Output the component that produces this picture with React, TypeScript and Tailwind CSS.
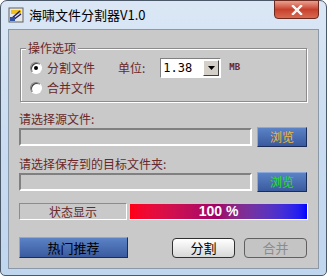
import type { ReactNode } from 'react';

// 海啸文件分割器 — 仿 Win7 窗口

const cjk = { fontFamily: '"Noto Sans CJK SC", "Liberation Sans", sans-serif' };
const mono = { fontFamily: '"DejaVu Sans Mono", monospace' };

function AppIcon() {
  return (
    <svg width="16" height="16" viewBox="0 0 16 16" className="shrink-0">
      <rect x="1" y="1" width="14" height="14" fill="#e8e8e8" stroke="#606060" />
      <rect x="3" y="3" width="10" height="4" fill="#f0c020" />
      <path d="M3 12 L12 4 M5 13 L13 7" stroke="#202060" strokeWidth="1.5" />
      <rect x="2" y="10" width="5" height="4" fill="#3050a0" />
    </svg>
  );
}

function Radio({ checked }: { checked?: boolean }) {
  return (
    <span className="flex h-[12px] w-[12px] items-center justify-center rounded-full border border-[#808080] border-b-white border-r-white bg-white shadow-[inset_1px_1px_0_#404040]">
      {checked && <span className="h-[4px] w-[4px] rounded-full bg-black" />}
    </span>
  );
}

function BlueBtn({ color, children }: { color: string; children: ReactNode }) {
  return (
    <div className="flex h-[20px] w-[50px] items-center justify-center border border-t-[#8aa8dc] border-l-[#8aa8dc] border-r-[#1c2c58] border-b-[#1c2c58] bg-gradient-to-b from-[#5b83c6] to-[#3a5a9e] text-[12px]" style={{ color }}>
      {children}
    </div>
  );
}

function PathField() {
  return <div className="h-[18px] w-[233px] border-2 border-t-[#808080] border-l-[#808080] border-b-white border-r-white bg-[#c9c9c9]" />;
}

export default function App() {
  return (
    <div className="h-[277px] w-[327px] bg-white" style={cjk}>
      <div className="flex h-[276px] w-[327px] flex-col rounded-t-[7px] rounded-b-[5px] border border-[#4a5868] bg-gradient-to-b from-[#dbe7f5] via-[#c9dcf1] to-[#c0d6ef]">
        {/* 标题栏 */}
        <div className="relative flex h-[28px] items-center gap-[5px] pl-[7px]">
          <AppIcon />
          <span className="text-[13px] text-black">海啸文件分割器V1.0</span>
          <div className="absolute right-[7px] top-[-1px] flex h-[19px] w-[45px] items-center justify-center rounded-b-[4px] border border-[#6b2a20] bg-gradient-to-b from-[#e8a090] via-[#c7402c] to-[#d86a50]">
            <svg width="12" height="10" viewBox="0 0 12 10">
              <path d="M2 1 L10 9 M10 1 L2 9" stroke="#fff" strokeWidth="2.4" strokeLinecap="square" />
              <path d="M2 1 L10 9 M10 1 L2 9" stroke="#f4f4f4" strokeWidth="1.2" />
            </svg>
          </div>
        </div>

        {/* 客户区 */}
        <div className="mx-[7px] h-[240px] border border-[#8a98a8] bg-[#c9c9c9] text-[12px] text-[#6a2828]">
          <div className="flex flex-col px-[10px] pt-[18px]">
            {/* 操作选项 */}
            <div className="relative mx-[1px] h-[54px] border border-[#8c8c8c] shadow-[1px_1px_0_#fff,inset_1px_1px_0_#fff]">
              <span className="absolute left-[5px] top-[-9px] bg-[#c9c9c9] px-[2px] leading-[16px]">操作选项</span>
              <div className="flex flex-col gap-[6px] pl-[9px] pt-[12px]">
                <div className="flex h-[14px] items-center">
                  <Radio checked />
                  <span className="ml-[5px]">分割文件</span>
                  <span className="ml-[23px]">单位:</span>
                  <div className="ml-[15px] flex h-[20px] w-[61px] items-center border border-t-[#808080] border-l-[#808080] border-b-white border-r-white bg-white">
                    <span className="flex-1 pl-[2px] text-[12px] text-black" style={mono}>1.38</span>
                    <span className="mr-[1px] flex h-[16px] w-[16px] items-center justify-center border border-t-white border-l-white border-r-[#404040] border-b-[#404040] bg-[#d4d0c8]">
                      <svg width="7" height="4" viewBox="0 0 7 4"><path d="M0 0 H7 L3.5 4 Z" fill="#000" /></svg>
                    </span>
                  </div>
                  <span className="ml-[8px] text-[9px] font-bold" style={mono}>MB</span>
                </div>
                <div className="flex h-[14px] items-center">
                  <Radio />
                  <span className="ml-[5px]">合并文件</span>
                </div>
              </div>
            </div>

            {/* 源文件 */}
            <span className="mt-[9px] leading-[16px]">请选择源文件:</span>
            <div className="flex items-center gap-[5px]">
              <PathField />
              <BlueBtn color="#f2b83a">浏览</BlueBtn>
            </div>

            {/* 目标文件夹 */}
            <span className="mt-[9px] leading-[16px]">请选择保存到的目标文件夹:</span>
            <div className="flex items-center gap-[5px]">
              <PathField />
              <BlueBtn color="#22e022">浏览</BlueBtn>
            </div>

            {/* 状态 */}
            <div className="mt-[11px] flex h-[17px] items-stretch gap-[2px]">
              <div className="flex w-[108px] items-center justify-center border border-t-[#8c8c8c] border-l-[#8c8c8c] border-b-white border-r-white">状态显示</div>
              <div className="flex flex-1 items-center justify-center border border-b-white border-r-white border-t-[#c9c9c9] border-l-[#c9c9c9] bg-gradient-to-r from-[#ff0010] via-[#a0006a] to-[#0000ff] text-[14px] font-bold text-white" style={{ fontFamily: '"Liberation Sans", sans-serif' }}>
                100 %
              </div>
            </div>

            {/* 按钮 */}
            <div className="mt-[17px] flex items-center">
              <div className="flex h-[21px] w-[109px] items-center justify-center border border-t-[#8aa8dc] border-l-[#8aa8dc] border-r-[#1c2c58] border-b-[#1c2c58] bg-gradient-to-b from-[#5b83c6] to-[#3a5a9e] text-[13px] text-black">
                热门推荐
              </div>
              <div className="ml-[44px] flex h-[20px] w-[63px] items-center justify-center rounded-[4px] border border-[#303030] bg-gradient-to-b from-white to-[#d8d8d8] text-[13px] text-black">
                分割
              </div>
              <div className="ml-[9px] flex h-[20px] w-[63px] items-center justify-center rounded-[4px] border border-[#606060] bg-[#c4c4c4] text-[13px] text-[#8c8c8c]">
                合并
              </div>
            </div>
          </div>
        </div>
      </div>
    </div>
  );
}
